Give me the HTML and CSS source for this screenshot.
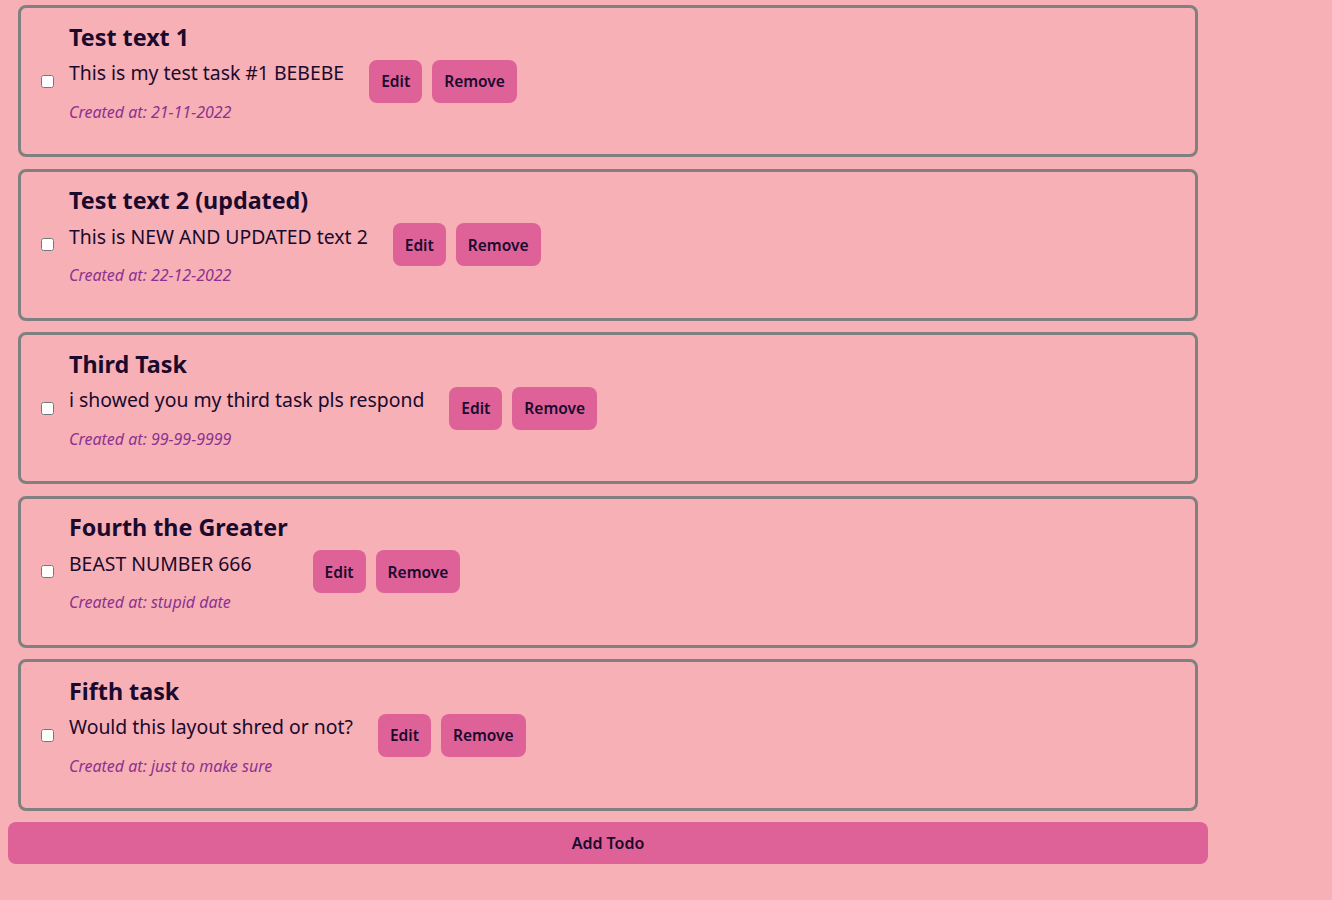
FILE: index.html
```html
<!DOCTYPE html>
<html>
<head>
<meta charset="utf-8">
<link rel="stylesheet" href="styles.css">
</head>
<body>
<div class="app">
  <div class="list">
    <div class="card">
      <input type="checkbox" class="check">
      <div class="content">
        <h2 class="title">Test text 1</h2>
        <p class="desc">This is my test task #1 BEBEBE</p>
        <p class="date">Created at: 21-11-2022</p>
      </div>
      <div class="actions"><button class="btn">Edit</button><button class="btn">Remove</button></div>
    </div>
    <div class="card">
      <input type="checkbox" class="check">
      <div class="content">
        <h2 class="title">Test text 2 (updated)</h2>
        <p class="desc">This is NEW AND UPDATED text 2</p>
        <p class="date">Created at: 22-12-2022</p>
      </div>
      <div class="actions"><button class="btn">Edit</button><button class="btn">Remove</button></div>
    </div>
    <div class="card">
      <input type="checkbox" class="check">
      <div class="content">
        <h2 class="title">Third Task</h2>
        <p class="desc">i showed you my third task pls respond</p>
        <p class="date">Created at: 99-99-9999</p>
      </div>
      <div class="actions"><button class="btn">Edit</button><button class="btn">Remove</button></div>
    </div>
    <div class="card">
      <input type="checkbox" class="check">
      <div class="content">
        <h2 class="title">Fourth the Greater</h2>
        <p class="desc">BEAST NUMBER 666</p>
        <p class="date">Created at: stupid date</p>
      </div>
      <div class="actions"><button class="btn">Edit</button><button class="btn">Remove</button></div>
    </div>
    <div class="card">
      <input type="checkbox" class="check">
      <div class="content">
        <h2 class="title">Fifth task</h2>
        <p class="desc">Would this layout shred or not?</p>
        <p class="date">Created at: just to make sure</p>
      </div>
      <div class="actions"><button class="btn">Edit</button><button class="btn">Remove</button></div>
    </div>
  </div>
  <button class="add">Add Todo</button>
</div>
</body>
</html>
```

FILE: styles.css
```css
html, body {
  margin: 0;
  padding: 0;
  background: #f7b0b5;
  font-family: "Noto Sans", "Open Sans", sans-serif;
  color: #1a0a2e;
}
.app {
  width: 1200px;
  padding: 5px 8px;
}
.list {
  display: flex;
  flex-direction: column;
  gap: 11.5px;
  padding: 0 10px;
}
.card {
  box-sizing: border-box;
  height: 152px;
  border: 3px solid #808080;
  border-radius: 8px;
  display: flex;
  align-items: center;
  padding-left: 20px;
}
.check {
  width: 13px;
  height: 13px;
  margin: 0 15px 0 0;
}
.content {
  align-self: flex-start;
  padding-top: 14.5px;
}
.title {
  margin: 0 0 10.75px;
  font-size: 23.3px;
  font-weight: 700;
  line-height: 28px;
}
.desc {
  margin: 0 0 16.5px;
  font-size: 19.4px;
  line-height: 24px;
}
.date {
  margin: 0;
  font-size: 16px;
  font-style: italic;
  color: #8b3391;
  line-height: 20px;
}
.actions {
  display: flex;
  gap: 10px;
  margin-left: 25px;
}
.btn {
  background: #de6198;
  border: none;
  border-radius: 8px;
  height: 43px;
  padding: 0 12px;
  font-family: inherit;
  font-size: 15.5px;
  font-weight: 600;
  color: #1a0a2e;
}
.add {
  display: block;
  width: 1200px;
  height: 42px;
  margin-top: 11px;
  background: #de6198;
  border: none;
  border-radius: 8px;
  font-family: inherit;
  font-size: 16px;
  font-weight: 600;
  color: #1a0a2e;
}
```
